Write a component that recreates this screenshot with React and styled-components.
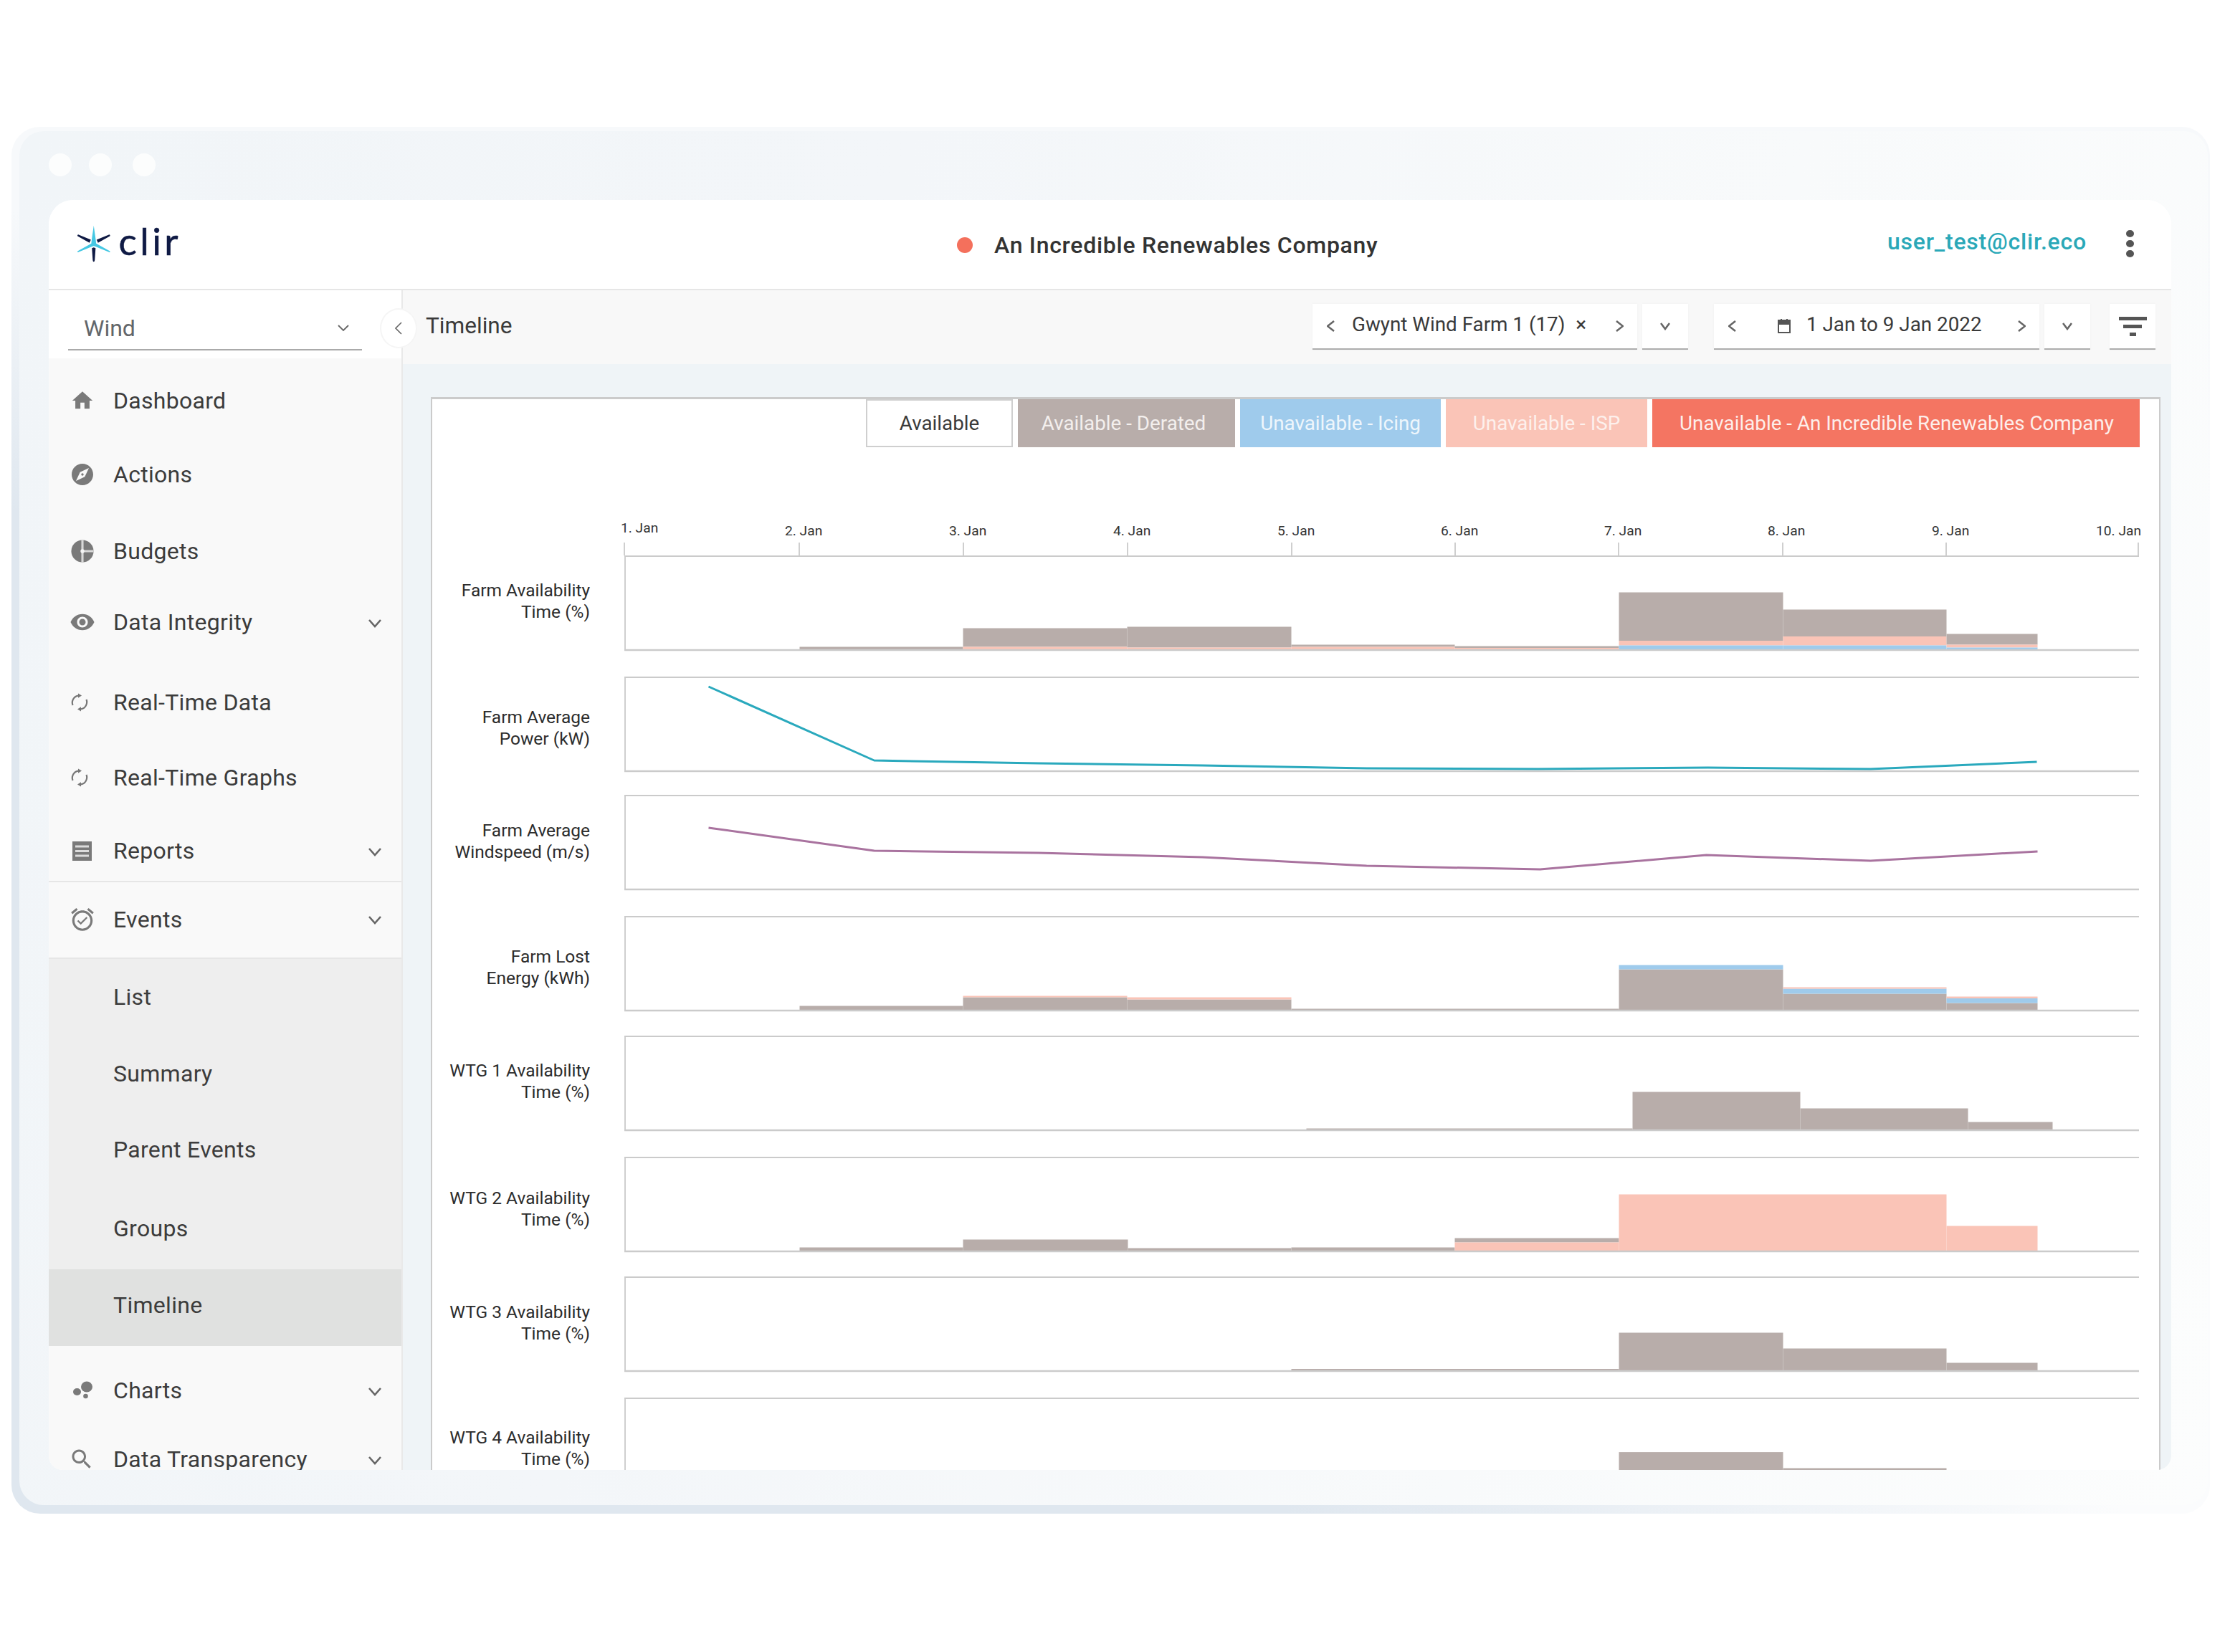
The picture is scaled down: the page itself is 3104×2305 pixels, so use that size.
import React from 'react';
import styled, { createGlobalStyle } from 'styled-components';

const Global = createGlobalStyle`
  html, body { margin: 0; padding: 0; background: #fff; }
  body { width: 3104px; height: 2305px; overflow: hidden; font-family: Roboto, "Liberation Sans", sans-serif; color: #3a3a3a; }
  * { box-sizing: border-box; }
`;

const Page = styled.div`
  width: 3104px; height: 2305px; padding: 177px 21px 193px 16px;
`;
const Frame = styled.div`
  width: 100%; height: 100%; padding: 6px 3px 12px 11px; border-radius: 40px;
  background:
    linear-gradient(to bottom, #f7f9fb 0, #f7f9fb 6%, rgba(247,249,251,0) 28%),
    linear-gradient(to right, #dfe7ef 0, #dfe7ef 58%, #fbfcfd 96%);
`;
const Glass = styled.div`
  height: 100%; display: flex; flex-direction: column; padding: 0 51px 49px 41px; border-radius: 34px;
  background: linear-gradient(105deg, #f1f5f8 0%, #f3f6f9 35%, #f8fafb 70%, #fcfdfd 100%);
`;
const Dots = styled.div`
  height: 96px; flex: none; display: flex; align-items: center; gap: 24px; padding: 0 0 2px 0;
`;
const Dot = styled.span`
  width: 32px; height: 32px; border-radius: 50%; background: #fcfdfd; margin-left: ${p => p.$ml || 0}px;
`;
const Window = styled.div`
  flex: 1; min-height: 0; display: flex; flex-direction: column; overflow: hidden;
  border-radius: 34px 34px 20px 20px; background: #fff;
`;
const Header = styled.header`
  height: 126px; flex: none; display: flex; align-items: center; background: #fff;
  border-bottom: 2px solid #e6e6e6; padding: 0 52px 0 40px;
`;
const Logo = styled.div`
  display: flex; align-items: center; gap: 12px; width: 145px; margin-top: -3px; flex: none;
`;
const LogoWord = styled.span`
  font-family: Lato, sans-serif; font-size: 53px; line-height: 60px; letter-spacing: 4.4px; color: #0f1a44;
  margin-top: -7px; font-weight: 400; -webkit-text-stroke: .5px #0f1a44;
`;
const Company = styled.div`
  display: flex; align-items: center; margin-left: 1082px; gap: 30px; margin-top: 2px;
  font-size: 32px; font-weight: 500; color: #333; letter-spacing: .72px;
`;
const RedDot = styled.span`
  width: 22px; height: 22px; border-radius: 50%; background: #f4705c; flex: none;
`;
const User = styled.div`
  margin-left: auto; font-size: 32px; font-weight: 500; color: #2aa8b8; margin-top: -8px; letter-spacing: .8px;
`;
const Kebab = styled.div`
  margin-left: 55px; display: flex; flex-direction: column; gap: 4px; margin-top: -2px;
`;
const KebabDot = styled.span`
  width: 11px; height: 10px; border-radius: 50%; background: #555;
`;
const Body = styled.div`
  flex: 1; min-height: 0; display: flex; position: relative;
`;
const Sidebar = styled.aside`
  width: 494px; flex: none; background: #f9f9f9; border-right: 2px solid #e9e9e9; overflow: hidden;
`;
const SelectArea = styled.div`
  height: 95px; background: #fff; padding: 34px 55px 0 27px;
`;
const Select = styled.div`
  height: 50px; border-bottom: 2px solid #aaa; display: flex; align-items: center; padding: 0 18px 10px 22px;
  font-size: 32px; color: #63666a; justify-content: space-between;
`;
const Nav = styled.nav`
  padding-top: 31px;
`;
const NavRow = styled.div`
  height: ${p => p.$h}px; display: flex; align-items: center; padding: 0 28px 0 27px;
  padding-bottom: ${p => p.$pb || 0}px;
  font-size: 32px; letter-spacing: .3px; color: #3c3c3c;
  background: ${p => p.$active ? '#e0e1e0' : p.$sub ? '#eeeeee' : 'transparent'};
  border-bottom: ${p => p.$rule ? '2px solid #e6e6e6' : 'none'};
`;
const NavIcon = styled.span`
  width: 63px; flex: none; display: flex; padding-left: ${p => p.$pl ?? 0}px;
  svg { display: block; }
`;
const NavChevron = styled.span`
  margin-left: auto; display: flex; margin-top: 3px;
`;
const Indent = styled.span`
  margin-left: 63px;
`;
const Main = styled.main`
  flex: 1; min-width: 0; display: flex; flex-direction: column; background: #eff4f7;
`;
const Toolbar = styled.div`
  height: 103px; flex: none; display: flex; align-items: flex-start; padding: 19px 22px 0 32px; background: #f8f8f8;
`;
const PageTitle = styled.div`
  font-size: 31.6px; line-height: 64px; color: #3a3a3a; margin-right: auto; margin-top: -1px;
`;
const Box = styled.div`
  height: 64px; width: ${p => p.$w}px; margin-left: ${p => p.$ml || 0}px; flex: none;
  background: #fff; border-bottom: 2px solid #adadad; display: flex; align-items: center;
  padding: 0 ${p => p.$pad ?? 19}px 0 ${p => p.$pad ?? 20}px; font-size: 27.8px; color: #3a3a3a;
  justify-content: ${p => p.$center ? 'center' : 'flex-start'};
  box-shadow: 0 0 3px rgba(0,0,0,.04);
`;
const BoxText = styled.span`
  margin-left: ${p => p.$ml}px; white-space: nowrap; margin-top: -5px;
`;
const Spacer = styled.span`
  margin-left: ${p => p.$ml === undefined ? 'auto' : p.$ml + 'px'}; display: flex;
`;
const FilterBars = styled.div`
  display: flex; flex-direction: column; align-items: center; gap: 6px;
`;
const FilterBar = styled.span`
  height: 5px; width: ${p => p.$w}px; background: #555;
`;
const Content = styled.div`
  flex: 1; min-height: 0; padding: 46px 15px 0 39px;
`;
const Panel = styled.section`
  height: 1600px; background: #fff; border: 2px solid #cbcbcb; border-top-width: 3px; position: relative;
`;
const Legend = styled.div`
  display: flex; justify-content: flex-end; padding-right: 27px; gap: 7px; height: 67px;
`;
const LegendItem = styled.div`
  width: ${p => p.$w}px; height: 67px; flex: none; display: flex; align-items: center; justify-content: center;
  font-size: 27.8px; color: ${p => p.$fg}; background: ${p => p.$bg};
  padding: 0 ${p => p.$pr || 0}px 0 ${p => p.$pl || 0}px;
  border: ${p => p.$outlined ? '2px solid #cfcfcf' : 'none'};
`;
const Axis = styled.svg`
  display: block; margin: 95px 0 0 246px;
  text { font-family: Roboto, sans-serif; font-size: 19.2px; fill: #333; }
`;
const Row = styled.div`
  display: flex; align-items: flex-start; margin-top: ${p => p.$mt}px;
`;
const RowLabel = styled.div`
  width: 220px; flex: none; text-align: right; font-size: 24.5px; line-height: 30px; color: #2c2c2c;
  margin-top: ${p => p.$top}px;
`;
const Plot = styled.svg`
  display: block; margin-left: 48px; flex: none;
`;

const G = '#b8adaa', P = '#fac4b7', B = '#9fcbec';
const X0 = 870.5;

const Chart = ({ top, rects = [], line, color }) => {
  const H = 134;
  return (
    <Plot width={2116} height={H}>
      {rects.map(([x1, x2, y1, y2, c], i) => (
        <rect key={i} x={x1 - X0} width={x2 - x1} y={y1 - top + 0.5} height={y2 - y1} fill={c} />
      ))}
      {line && (
        <polyline
          points={line.map(([x, y]) => `${x - X0},${y - top}`).join(' ')}
          fill="none" stroke={color} strokeWidth="3" strokeLinejoin="round"
        />
      )}
      <path d="M1 0V132" stroke="#cfcfcf" strokeWidth="2" fill="none" />
      <path d="M0 1H2113" stroke="#cbcbcb" strokeWidth="2" fill="none" />
      <path d="M0 132H2113" stroke="#cbcbcb" strokeWidth="2.5" fill="none" />
    </Plot>
  );
};

const charts = [
  { mt: 0, top: 776, labelTop: 34, label: ['Farm Availability', 'Time (%)'], rects: [
    [1115,1343,903,907,G],[1343,1572,877,903,G],[1343,1572,903,907,P],
    [1572,1801,875,904,G],[1572,1801,904,907,P],[1801,2029,900,903,G],[1801,2029,903,907,P],
    [2029,2258,902,904.5,G],[2029,2258,904.5,907,P],
    [2258,2487,827,894.5,G],[2258,2487,894.5,901,P],[2258,2487,901,907,B],
    [2487,2715,851,888.5,G],[2487,2715,888.5,901,P],[2487,2715,901,907,B],
    [2715,2842,885,900,G],[2715,2842,900,904,P],[2715,2842,904,907,B],
  ]},
  { mt: 35, top: 945, labelTop: 42, label: ['Farm Average', 'Power (kW)'], color: '#2aa9bd',
    line: [[988,959],[1219,1062],[1448,1066],[1677,1069],[1906,1073],[2145,1074],[2382,1072],[2609,1074],[2841,1064]] },
  { mt: 31, top: 1110, labelTop: 35, label: ['Farm Average', 'Windspeed (m/s)'], color: '#a9739f',
    line: [[988,1156],[1219,1188],[1448,1191],[1677,1197],[1906,1209],[2148,1214],[2380,1194],[2609,1202],[2842,1189]] },
  { mt: 35, top: 1279, labelTop: 42, label: ['Farm Lost', 'Energy (kWh)'], rects: [
    [1115,1343,1404,1411,G],[1343,1572,1392,1411,G],[1343,1572,1390,1392,P],
    [1572,1801,1395,1411,G],[1572,1801,1392,1395,P],[1801,2258,1408,1411,G],
    [2258,2487,1353,1411,G],[2258,2487,1347,1353,B],
    [2487,2715,1387,1411,G],[2487,2715,1380,1387,B],[2487,2715,1378,1380,P],
    [2715,2842,1400,1411,G],[2715,2842,1393.5,1400,B],[2715,2842,1391,1393.5,P],
  ]},
  { mt: 33, top: 1446, labelTop: 34, label: ['WTG 1 Availability', 'Time (%)'], rects: [
    [1822,2277,1575,1577,G],[2277,2511,1524,1577,G],[2511,2745,1547,1577,G],[2745,2863,1566,1577,G],
  ]},
  { mt: 35, top: 1615, labelTop: 43, label: ['WTG 2 Availability', 'Time (%)'], rects: [
    [1115,1343,1741,1747,G],[1343,1573,1730,1747,G],[1573,1801,1742,1747,G],[1801,2029,1741,1747,G],
    [2029,2258,1728,1734,G],[2029,2258,1734,1747,P],[2258,2715,1667,1747,P],[2715,2842,1711,1747,P],
  ]},
  { mt: 33, top: 1782, labelTop: 35, label: ['WTG 3 Availability', 'Time (%)'], rects: [
    [1801,2258,1910.5,1913,G],[2258,2487,1860,1913,G],[2487,2715,1882,1913,G],[2715,2842,1902,1913,G],
  ]},
  { mt: 35, top: 1951, labelTop: 41, label: ['WTG 4 Availability', 'Time (%)'], rects: [
    [2258,2487,2026.6,2082,G],[2487,2715,2049,2082,G],
  ]},
];

const ticks = [871,1115,1344,1573,1802,2030,2258,2487,2715,2983];
const tickLabels = [
  ['1. Jan', 867, 737],['2. Jan', 1096, 741],['3. Jan', 1325, 741],['4. Jan', 1554, 741],['5. Jan', 1783, 741],
  ['6. Jan', 2011, 741],['7. Jan', 2239, 741],['8. Jan', 2467, 741],['9. Jan', 2696, 741],['10. Jan', 2925, 741],
];

const TimeAxis = () => (
  <Axis width={2150} height={56}>
    {ticks.map(x => <path key={x} d={`M${x - 850 + 1} 38V56`} stroke="#cfcfcf" strokeWidth="2" />)}
    {tickLabels.map(([t, x, y]) => (
      <text key={t} x={x - 850} y={y - 720 + 7}>{t}</text>
    ))}
  </Axis>
);

const Icon = ({ size = 34, children }) => (
  <svg width={size} height={size} viewBox="0 0 24 24" fill="#7a7a7a">{children}</svg>
);
const Home = () => <Icon><path d="M10 20v-6h4v6h5v-8h3L12 3 2 12h3v8z"/></Icon>;
const Compass = () => <Icon size={36}><path d="M12 10.9c-.61 0-1.1.49-1.1 1.1s.49 1.1 1.1 1.1c.61 0 1.1-.49 1.1-1.1s-.49-1.1-1.1-1.1zM12 2C6.48 2 2 6.48 2 12s4.48 10 10 10 10-4.48 10-10S17.52 2 12 2zm2.19 12.19L6 18l3.81-8.19L18 6l-3.81 8.19z"/></Icon>;
const Budget = () => (
  <Icon>
    <circle cx="12" cy="12" r="11" />
    <path d="M12 1V23M12 12H23" stroke="#d8d8d8" strokeWidth="2.2" />
    <circle cx="12" cy="12" r="1.9" fill="#f5f5f5" />
  </Icon>
);
const Eye = () => <svg width="36" height="36" viewBox="0 0 24 24" fill="#7a7a7a"><path d="M12 4.5C7 4.5 2.73 7.61 1 12c1.73 4.39 6 7.5 11 7.5s9.27-3.11 11-7.5c-1.73-4.39-6-7.5-11-7.5zM12 17c-2.76 0-5-2.24-5-5s2.24-5 5-5 5 2.24 5 5-2.24 5-5 5zm0-8c-1.66 0-3 1.34-3 3s1.34 3 3 3 3-1.34 3-3-1.34-3-3-3z"/></svg>;
const Sync = () => (
  <svg width="24" height="26" viewBox="0 0 24 26" fill="#777">
    <path d="M2.5 17A10 10 0 0 1 10 3.6" fill="none" stroke="#777" strokeWidth="2.2"/>
    <path d="M10 .6L15 3.6 10 6.8Z"/>
    <path d="M21.5 9A10 10 0 0 1 14 22.4" fill="none" stroke="#777" strokeWidth="2.2"/>
    <path d="M14 19.2L9 22.4 14 25.4Z"/>
  </svg>
);
const Report = () => (
  <svg width="27" height="27" viewBox="0 0 27 27" fill="#7a7a7a">
    <rect width="27" height="27" />
    <path d="M4 7H23M4 13.5H23M4 20H23" stroke="#dcdcdc" strokeWidth="3" />
  </svg>
);
const Alarm = () => <Icon size={38}><path d="M22 5.72l-4.6-3.86-1.29 1.53 4.6 3.86L22 5.72zM7.88 3.39L6.6 1.86 2 5.71l1.29 1.53 4.59-3.85zM12 4c-4.97 0-9 4.03-9 9s4.03 9 9 9 9-4.03 9-9-4.03-9-9-9zm0 16c-3.86 0-7-3.14-7-7s3.14-7 7-7 7 3.14 7 7-3.13 7-7 7zm-1.46-5.47L8.41 12.4l-1.06 1.06 3.18 3.18 6-6-1.06-1.06-4.93 4.95z"/></Icon>;
const Bubbles = () => (
  <svg width="27" height="26" viewBox="0 0 27 26" fill="#7a7a7a">
    <ellipse cx="5.5" cy="15" rx="5.5" ry="5" />
    <ellipse cx="19" cy="8" rx="8" ry="7.5" />
    <circle cx="17.5" cy="21" r="3.3" />
  </svg>
);
const Search = () => <svg width="36" height="36" viewBox="0 0 24 24" fill="#7a7a7a"><path d="M15.5 14h-.79l-.28-.27C15.41 12.59 16 11.11 16 9.5 16 5.91 13.09 3 9.5 3S3 5.91 3 9.5 5.91 16 9.5 16c1.61 0 3.09-.59 4.23-1.57l.27.28v.79l5 4.99L20.49 19l-4.99-5zm-6 0C7.01 14 5 11.99 5 9.5S7.01 5 9.5 5 14 7.01 14 9.5 11.99 14 9.5 14z"/></svg>;

const Chevron = ({ w = 18, h = 12, dir = 'down', stroke = '#666', sw = 2.6 }) => {
  const d = dir === 'down' ? `M1 1L${w / 2} ${h - 2}L${w - 1} 1`
    : dir === 'left' ? `M${w - 1} 1L1 ${h / 2}L${w - 1} ${h - 1}`
    : `M1 1L${w - 1} ${h / 2}L1 ${h - 1}`;
  return <svg width={w} height={h} viewBox={`0 0 ${w} ${h}`} fill="none" stroke={stroke} strokeWidth={sw}><path d={d}/></svg>;
};

const Star = () => (
  <svg width="54" height="60" viewBox="0 0 160 178">
    <path fill="#46c8e3" d="M80 0C84 30 90 65 92 88L158 125Q163 130 157 131L84 101Q80 99 76 101L3 131Q-3 130 2 125L68 88C70 65 76 30 80 0Z"/>
    <path fill="#0f1a44" d="M4 44L66 70 59 85 1 52Q-2 46 4 44ZM156 44L94 70 101 85 159 52Q162 46 156 44ZM80 178Q76 178 75 170L71 111 80 107 89 111 85 170Q84 178 80 178Z"/>
  </svg>
);

const CollapseButton = styled.div`
  position: absolute; left: 462px; top: 25px; width: 52px; height: 56px; border-radius: 50%;
  background: #fff; border: 2px solid #f5f5f5; display: flex; align-items: center; justify-content: center;
`;

const menuTop = [
  { h: 56, icon: <Home />, pl: 3, text: 'Dashboard' },
  { h: 150, icon: <Compass />, pl: 2, text: 'Actions' },
  { h: 64, icon: <Budget />, pl: 3, text: 'Budgets' },
  { h: 134, icon: <Eye />, pl: 2, text: 'Data Integrity', more: true },
  { h: 90, icon: <Sync />, pl: 4, text: 'Real-Time Data' },
  { h: 120, icon: <Sync />, pl: 4, text: 'Real-Time Graphs' },
  { h: 86, icon: <Report />, pl: 6, text: 'Reports', more: true, rule: true },
  { h: 107, icon: <Alarm />, pl: 1, text: 'Events', more: true, rule: true, pb: 2 },
];
const menuSub = [
  { h: 105, text: 'List' },
  { h: 109, text: 'Summary' },
  { h: 104, text: 'Parent Events' },
  { h: 115, text: 'Groups' },
];
const menuEnd = [
  { h: 124, icon: <Bubbles />, pl: 7, text: 'Charts', more: true },
  { h: 68, icon: <Search />, pl: 1, text: 'Data Transparency', more: true },
];

const MenuItem = ({ h, icon, pl, text, more, rule, pb }) => (
  <NavRow $h={h} $rule={rule} $pb={pb}>
    <NavIcon $pl={pl}>{icon}</NavIcon>
    {text}
    {more && <NavChevron><Chevron /></NavChevron>}
  </NavRow>
);

export default function App() {
  return (
    <Page>
      <Global />
      <Frame>
        <Glass>
          <Dots>
            <Dot /><Dot /><Dot $ml={5} />
          </Dots>
          <Window>
            <Header>
              <Logo><Star /><LogoWord>clir</LogoWord></Logo>
              <Company><RedDot />An Incredible Renewables Company</Company>
              <User>user_test@clir.eco</User>
              <Kebab><KebabDot /><KebabDot /><KebabDot /></Kebab>
            </Header>
            <Body>
              <Sidebar>
                <SelectArea>
                  <Select>Wind<Chevron w={16} h={10} sw={1.8} stroke="#666" /></Select>
                </SelectArea>
                <Nav>
                  {menuTop.map(m => <MenuItem key={m.text} {...m} />)}
                  {menuSub.map(m => (
                    <NavRow key={m.text} $h={m.h} $sub><Indent>{m.text}</Indent></NavRow>
                  ))}
                  <NavRow $h={107} $active $pb={8}><Indent>Timeline</Indent></NavRow>
                  {menuEnd.map(m => <MenuItem key={m.text} {...m} />)}
                </Nav>
              </Sidebar>
              <CollapseButton><Chevron dir="left" w={10} h={18} sw={1.6} stroke="#666" /></CollapseButton>
              <Main>
                <Toolbar>
                  <PageTitle>Timeline</PageTitle>
                  <Box $w={453}>
                    <Chevron dir="left" w={11} h={16} />
                    <BoxText $ml={24}>Gwynt Wind Farm 1 (17)</BoxText>
                    <BoxText $ml={15}>×</BoxText>
                    <Spacer><Chevron dir="right" w={11} h={16} /></Spacer>
                  </Box>
                  <Box $w={64} $ml={7} $center $pad={0}><Chevron w={14} h={11} /></Box>
                  <Box $w={454} $ml={36}>
                    <Chevron dir="left" w={11} h={16} />
                    <Spacer $ml={58}>
                      <svg width="18" height="20" viewBox="0 0 18 20">
                        <rect x="1" y="2" width="16" height="17" fill="none" stroke="#555" strokeWidth="2"/>
                        <rect x="1" y="2" width="16" height="6" fill="#555"/>
                        <path d="M5 0V3M13 0V3" stroke="#555" strokeWidth="2"/>
                      </svg>
                    </Spacer>
                    <BoxText $ml={22}>1 Jan to 9 Jan 2022</BoxText>
                    <Spacer><Chevron dir="right" w={11} h={16} /></Spacer>
                  </Box>
                  <Box $w={64} $ml={7} $center $pad={0}><Chevron w={14} h={11} /></Box>
                  <Box $w={64} $ml={27} $center $pad={0}>
                    <FilterBars><FilterBar $w={39} /><FilterBar $w={26} /><FilterBar $w={9} /></FilterBars>
                  </Box>
                </Toolbar>
                <Content>
                  <Panel>
                    <Legend>
                      <LegendItem $w={205} $outlined $bg="#fff" $fg="#3a3a3a">Available</LegendItem>
                      <LegendItem $w={303} $pr={8} $bg={G} $fg="#f3efed">Available - Derated</LegendItem>
                      <LegendItem $w={280} $bg={B} $fg="#eef6fc">Unavailable - Icing</LegendItem>
                      <LegendItem $w={281} $bg={P} $fg="#fdf0ec">Unavailable - ISP</LegendItem>
                      <LegendItem $w={680} $pl={2} $bg="#f47562" $fg="#fdeeea">Unavailable - An Incredible Renewables Company</LegendItem>
                    </Legend>
                    <TimeAxis />
                    {charts.map(c => (
                      <Row key={c.top} $mt={c.mt}>
                        <RowLabel $top={c.labelTop}>{c.label[0]}<br />{c.label[1]}</RowLabel>
                        <Chart top={c.top} rects={c.rects} line={c.line} color={c.color} />
                      </Row>
                    ))}
                  </Panel>
                </Content>
              </Main>
            </Body>
          </Window>
        </Glass>
      </Frame>
    </Page>
  );
}
